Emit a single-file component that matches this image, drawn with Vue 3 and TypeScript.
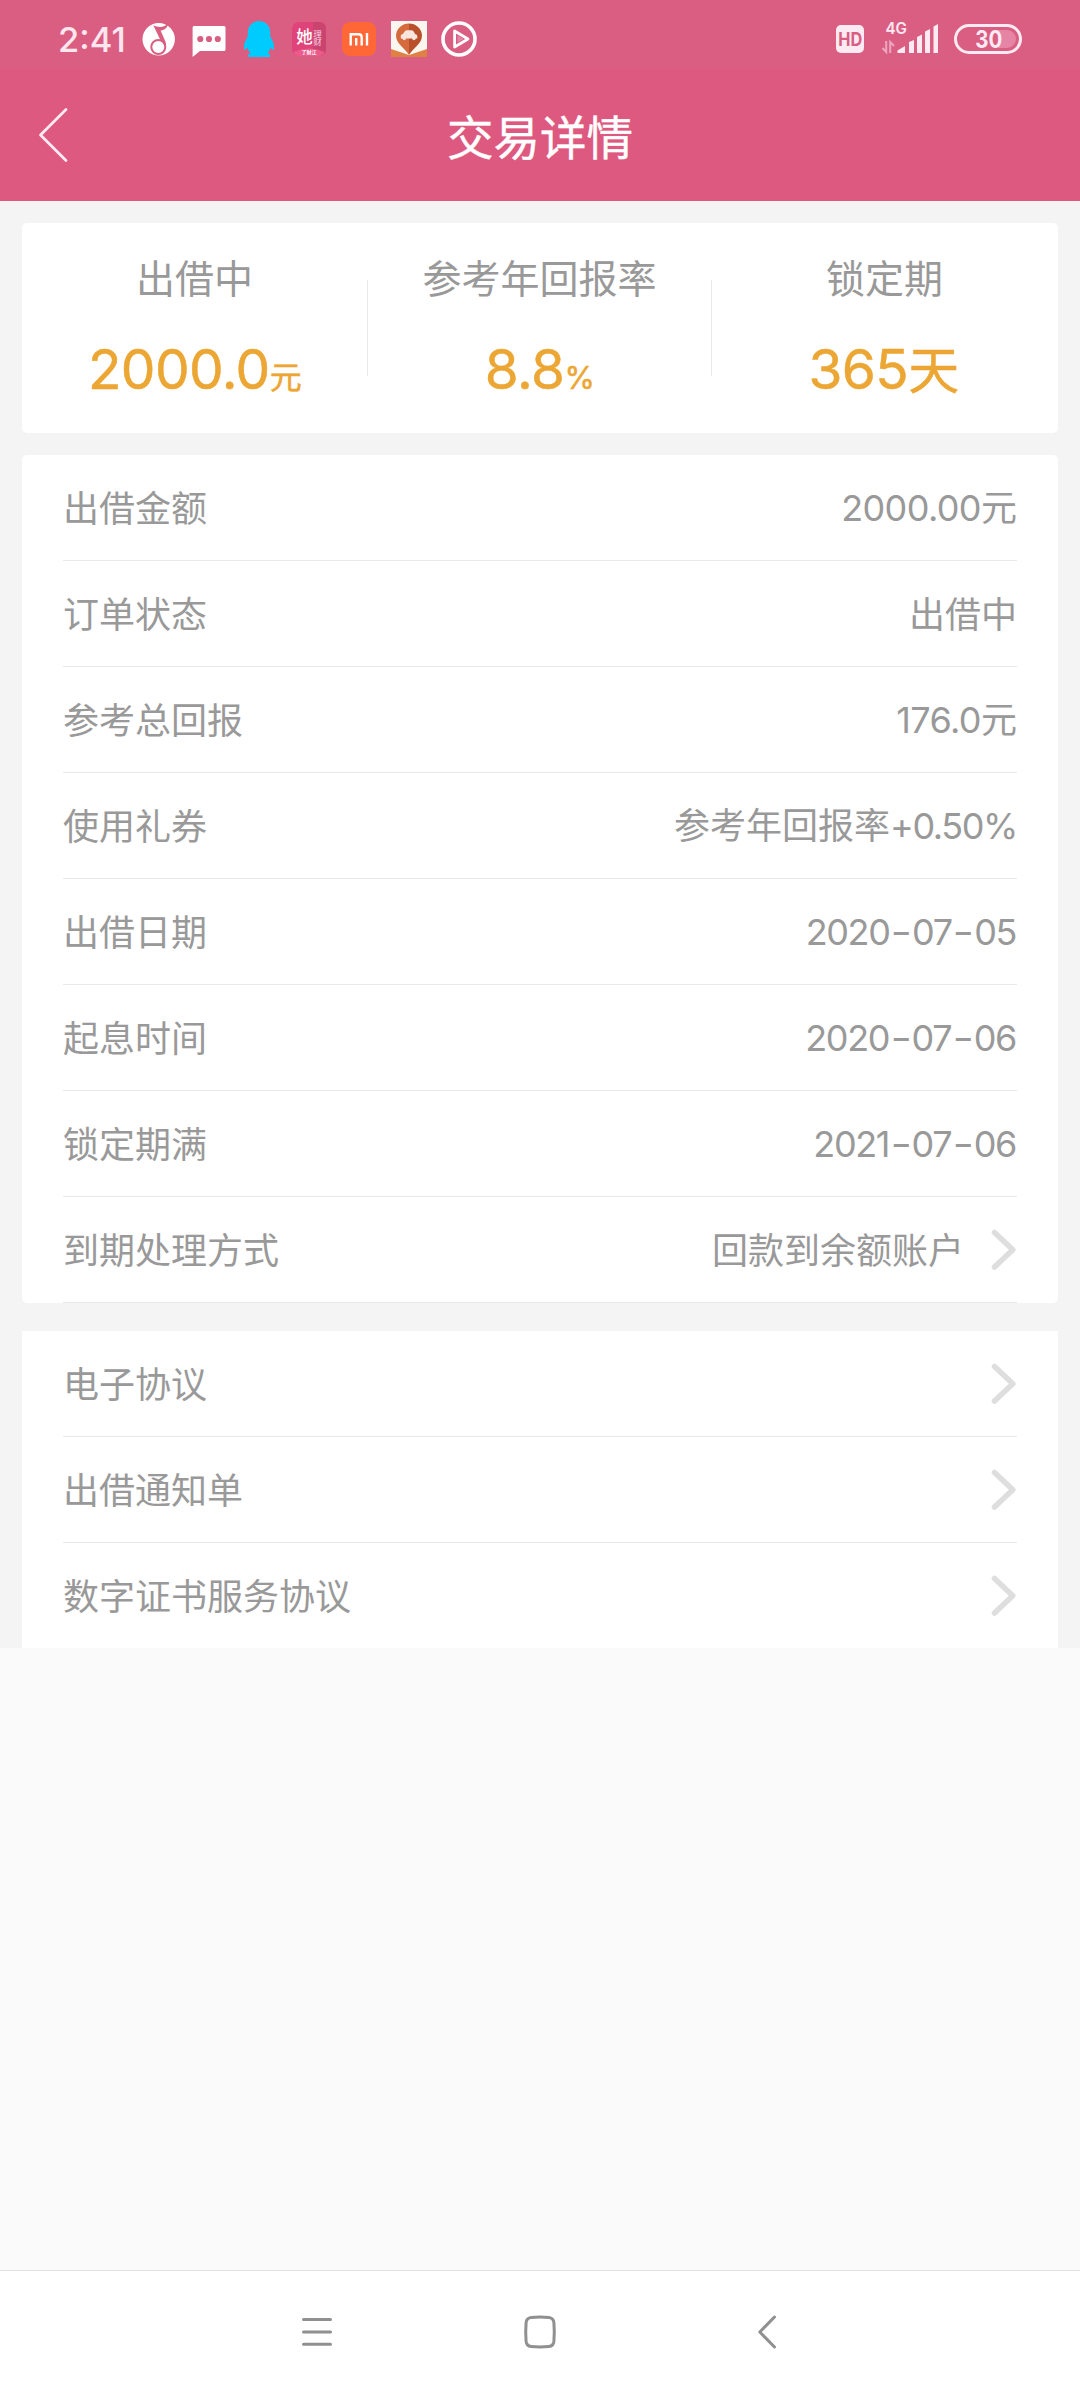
<script setup lang="ts">
interface Row {
  label: string
  value?: string
  kind?: 'money' | 'rate' | 'date'
  arrow?: boolean
}

interface Part {
  text: string
  type: 'han' | 'digits' | 'dash'
}

const details: Row[] = [
  { label: '出借金额', value: '2000.00元', kind: 'money' },
  { label: '订单状态', value: '出借中' },
  { label: '参考总回报', value: '176.0元', kind: 'money' },
  { label: '使用礼券', value: '参考年回报率+0.50%', kind: 'rate' },
  { label: '出借日期', value: '2020-07-05', kind: 'date' },
  { label: '起息时间', value: '2020-07-06', kind: 'date' },
  { label: '锁定期满', value: '2021-07-06', kind: 'date' },
  { label: '到期处理方式', value: '回款到余额账户', arrow: true },
]

const documents: Row[] = [
  { label: '电子协议', arrow: true },
  { label: '出借通知单', arrow: true },
  { label: '数字证书服务协议', arrow: true },
]

// Splits a value so that figures and dashes can be tracked apart from Chinese text.
function split(value: string): Part[] {
  return (value.match(/-|[0-9.+%]+|[^0-9.+%-]+/g) ?? []).map((text) => ({
    text,
    type: text === '-' ? 'dash' : /^[0-9.+%]/.test(text) ? 'digits' : 'han',
  }))
}
</script>

<template>
  <div class="screen">
    <div class="status">
      <span class="time">2:41</span>
      <div class="apps">
        <svg width="34" height="36" viewBox="0 0 34 36">
          <circle cx="16.7" cy="18.3" r="16.2" fill="#fff" />
          <circle cx="16.3" cy="26" r="7" fill="#fff" stroke="#d95e82" stroke-width="2" />
          <path d="M11.3 4.2 C17 7 22 6.4 26.4 2.2 C25.4 6.6 23.4 8.6 18.6 9.6 L23.6 21 C24 22.6 24 24.6 23.4 26.6 L20.8 21.8 L18.6 19.4Z" fill="#d95e82" />
        </svg>
        <svg width="34" height="36" viewBox="0 0 34 36">
          <path d="M2 5 H32 Q33.5 5 33.5 6.5 V28.5 Q33.5 30 32 30 H8 L.6 36 V6.5 Q.6 5 2 5Z" fill="#fff" />
          <g fill="#d95e82"><circle cx="8.3" cy="18" r="3.1" /><circle cx="17" cy="18" r="3.1" /><circle cx="25.8" cy="18" r="3.1" /></g>
        </svg>
        <svg width="34" height="36" viewBox="0 0 34 36">
          <path d="M17 0 C23 0 28 4.5 28.2 11 C28.2 14 28 15 29 17 C31.5 20.5 32.6 25.5 31.8 28.5 C30.8 29.5 29.4 27.6 28.5 26.2 C28 29 26.8 31 25.5 32.2 C28 33 28.8 34 27.8 36 H6.4 C5.4 34 6.2 33 8.6 32.2 C7.2 31 6 29 5.5 26.2 C4.6 27.6 3.2 29.5 2.2 28.5 C1.4 25.5 2.5 20.5 5 17 C6 15 5.8 14 5.8 11 C6 4.5 11 0 17 0Z" fill="#00cbff" />
        </svg>
        <svg width="34" height="36" viewBox="0 0 34 36">
          <rect x="0" y="1" width="34" height="34" rx="7" fill="#e0437a" />
          <path d="M21 1 H27 Q34 1 34 8 V28 Q34 35 27 35 H21Z" fill="#ca4470" />
          <path d="M1.3 31 Q17 24 32.7 31 Q31 35 27 35 H7 Q3 35 1.3 31Z" fill="#ec5c8b" />
          <text x="4.3" y="22" class="cjk" font-size="16.5" font-weight="500" fill="#fff">她</text>
          <text x="21.3" y="15.5" class="cjk" font-size="8.5" fill="#fbd3e1">理</text>
          <text x="21.3" y="24.3" class="cjk" font-size="8.5" fill="#fbd3e1">财</text>
          <text x="9.6" y="33.4" class="cjk" font-size="5" font-weight="700" fill="#fff">了财江</text>
        </svg>
        <svg width="34" height="36" viewBox="0 0 34 36">
          <rect x="0" y="1" width="34" height="34" rx="8" fill="#ff6736" />
          <path d="M8.7 24.5 V13.2 H16.5 Q19.7 13.2 19.7 16.4 V24.5 M14.2 17 V24.5 M25 12 V24.5" fill="none" stroke="#fff" stroke-width="2.4" />
        </svg>
        <svg width="34" height="36" viewBox="0 0 34 36">
          <rect x="-1" y="0" width="36" height="36" fill="#fbf6f0" />
          <path d="M-1 28 L17 34 L35 28 V36 H-1Z" fill="#df8045" />
          <path d="M17 34 C13 27 4 23 4 14.5 A13 12.5 0 0 1 17 2.5Z" fill="#d56a3c" />
          <path d="M17 34 C21 27 30 23 30 14.5 A13 12.5 0 0 0 17 2.5Z" fill="#b9502b" />
          <path d="M8.8 17.5 V14.5 Q9 13.2 11 13 Q12.7 9.2 15 9.2 H19.3 Q21.8 9.2 23 13 Q25.3 13.4 25.3 15 V17.5Z" fill="#f6e6de" />
          <circle cx="12.2" cy="17.6" r="1.7" fill="#f6e6de" /><circle cx="22" cy="17.6" r="1.7" fill="#f6e6de" />
        </svg>
        <svg width="34" height="36" viewBox="0 0 34 36">
          <circle cx="17" cy="18" r="16" fill="none" stroke="#fff" stroke-width="3.6" />
          <path d="M12.6 10 V26 L26 18Z" fill="none" stroke="#fff" stroke-width="2.8" stroke-linejoin="round" />
          <path d="M15.6 14.5 V21.5 L21.5 18Z" fill="#e38aa6" />
        </svg>
      </div>
      <div class="signals">
        <svg width="28" height="36" viewBox="0 0 28 36">
          <rect x="0" y="4" width="28" height="28" rx="5" fill="#feeaf2" />
          <text x="14.3" y="24.8" class="latin" font-size="18.5" font-weight="700" text-anchor="middle" textLength="24" lengthAdjust="spacingAndGlyphs" fill="#d95e82">HD</text>
        </svg>
        <svg class="mobile" width="58" height="36" viewBox="0 0 58 36">
          <text x="4.5" y="13" class="latin" font-size="15.5" font-weight="600" textLength="21.5" lengthAdjust="spacingAndGlyphs" fill="#feeaf2">4G</text>
          <path d="M5.2 20 V31 L1.5 27 M9.2 32 V21 L13 25" fill="none" stroke="#eda6bf" stroke-width="2" />
          <path d="M16.5 32 V29.5 L24 25 V32Z M28 21 L33 19 V32 H28Z M36 16 L41 13.5 V32 H36Z M44 10.5 L49 8 V32 H44Z M52.5 5.5 L57 3 V32 H52.5Z" fill="#feeaf2" />
        </svg>
        <svg class="battery" width="68" height="36" viewBox="0 0 68 36">
          <path d="M44 9 H53 A9 9 0 0 1 53 27 H44Z" fill="#e684a5" />
          <rect x="1.5" y="4.5" width="65" height="27" rx="13.5" fill="none" stroke="#feeaf2" stroke-width="3" />
          <text x="34.7" y="26.7" class="latin" font-size="24" font-weight="700" text-anchor="middle" textLength="27" lengthAdjust="spacingAndGlyphs" fill="#feeaf2">30</text>
        </svg>
      </div>
    </div>

    <header class="header">
      <svg class="back" width="30" height="56" viewBox="0 0 30 56">
        <path d="M28 2.5 L2.5 28 L28 53.5" fill="none" stroke="#feeaf2" stroke-width="2.8" stroke-linecap="round" stroke-linejoin="round" />
      </svg>
      <h1>交易详情</h1>
    </header>

    <main class="content">
      <section class="card summary">
        <div class="stat">
          <span class="caption">出借中</span>
          <span class="amount">2000.0<small>元</small></span>
        </div>
        <i class="divider"></i>
        <div class="stat middle">
          <span class="caption">参考年回报率</span>
          <span class="amount">8.8<small class="percent">%</small></span>
        </div>
        <i class="divider"></i>
        <div class="stat">
          <span class="caption">锁定期</span>
          <span class="amount days">365<b>天</b></span>
        </div>
      </section>

      <section class="card details">
        <div v-for="row in details" :key="row.label" class="row">
          <span class="label">{{ row.label }}</span>
          <span class="value" :class="row.kind"><span v-for="(part, i) in split(row.value ?? '')" :key="i" :class="part.type">{{ part.text }}</span></span>
          <svg v-if="row.arrow" class="chevron" width="25" height="42" viewBox="0 0 25 42">
            <path d="M2.5 3.5 L20.8 20.7 L2.5 38" />
          </svg>
        </div>
      </section>

      <section class="card documents">
        <div v-for="row in documents" :key="row.label" class="row">
          <span class="label">{{ row.label }}</span>
          <svg class="chevron" width="25" height="42" viewBox="0 0 25 42">
            <path d="M2.5 3.5 L20.8 20.7 L2.5 38" />
          </svg>
        </div>
      </section>
    </main>

    <nav class="navbar">
      <svg width="32" height="34" viewBox="0 0 32 34">
        <path d="M2.5 4.5 H29.5 M2.5 17 H29.5 M2.5 29.3 H29.5" />
      </svg>
      <svg width="34" height="34" viewBox="0 0 34 34">
        <path d="M8 2.5 Q17 1.6 26 2.5 Q30.3 3 30.9 7.5 Q31.7 17 30.9 26.5 Q30.3 31 26 31.5 Q17 32.4 8 31.5 Q3.7 31 3.1 26.5 Q2.3 17 3.1 7.5 Q3.7 3 8 2.5Z" />
      </svg>
      <svg width="32" height="34" viewBox="0 0 32 34">
        <path d="M27.5 2 L12.8 17 L27.5 32" />
      </svg>
    </nav>
  </div>
</template>

<style>
body {
  margin: 0;
  background: #fafafa;
}
</style>

<style scoped>
.screen {
  width: 1080px;
  height: 2400px;
  display: flex;
  flex-direction: column;
  background: #fafafa;
  font-family: Inter, "Noto Sans CJK SC", sans-serif;
  color: #999;
  overflow: hidden;
}
svg {
  display: block;
  flex: none;
  overflow: visible;
}
.cjk {
  font-family: "Noto Sans CJK SC", sans-serif;
}
.latin {
  font-family: Inter, sans-serif;
}
.status {
  height: 69px;
  box-sizing: border-box;
  padding: 21px 58px 0 58px;
  display: flex;
  align-items: flex-start;
  background: #d95e82;
}
.time {
  width: 84px;
  font-size: 34.5px;
  line-height: 37px;
  font-weight: 500;
  color: #fee6ef;
  white-space: nowrap;
}
.apps {
  display: flex;
  gap: 16px;
}
.signals {
  display: flex;
  margin-left: auto;
}
.mobile {
  margin-left: 17px;
}
.battery {
  margin-left: 15px;
}
.header {
  height: 132px;
  display: flex;
  align-items: center;
  background: #de5980;
}
.back {
  margin: 0 0 1px 38px;
}
h1 {
  flex: 1;
  margin: 0 68px 0 0;
  padding-top: 5px;
  text-align: center;
  font-size: 46.5px;
  line-height: 60px;
  font-weight: 400;
  color: #fff;
  -webkit-text-stroke: 0.4px #fff;
}
.content {
  height: 1447px;
  box-sizing: border-box;
  padding: 22px 22px 0;
  background: #f4f4f4;
  overflow: hidden;
}
.card {
  background: #fff;
  border-radius: 5px;
}
.summary {
  height: 210px;
  display: flex;
}
.stat {
  width: 345px;
  display: flex;
  flex-direction: column;
  align-items: center;
}
.middle {
  width: 343px;
}
.caption {
  margin-top: 28px;
  font-size: 39px;
  line-height: 56px;
}
.amount {
  margin-top: 27px;
  font-size: 55px;
  line-height: 70px;
  font-weight: 400;
  letter-spacing: -0.6px;
  color: #eca633;
  -webkit-text-stroke: 0.5px #eca633;
  white-space: nowrap;
}
.amount small {
  font-size: 32px;
}
.amount .percent {
  font-size: 31px;
}
.amount b {
  font-size: 51px;
  font-weight: 400;
}
.days {
  margin-right: 2px;
  letter-spacing: -0.6px;
}
.divider {
  width: 1px;
  height: 96px;
  margin-top: 57px;
  background: #e8e8e8;
}
.details {
  margin-top: 22px;
  padding: 0 41px;
}
.documents {
  margin-top: 28px;
  padding: 0 41px;
  border-radius: 0;
}
.row {
  height: 106px;
  box-sizing: border-box;
  display: flex;
  align-items: center;
  border-bottom: 1px solid #e8e8e8;
  font-size: 36px;
  line-height: 52px;
}
.label,
.value {
  padding-top: 2px;
}
.value {
  margin-left: auto;
  white-space: nowrap;
}
.value.money,
.value.rate,
.value.date {
  padding-top: 0;
}
.money .digits {
  letter-spacing: -0.6px;
}
.rate .digits {
  letter-spacing: -1.4px;
}
.date {
  margin-right: 1px;
}
.date .digits {
  letter-spacing: -1.4px;
}
.date .dash {
  display: inline-block;
  margin: 0 2.5px 0 3.5px;
  transform: scaleX(1.3);
}
.chevron {
  margin-left: auto;
}
.value + .chevron {
  margin-left: 28px;
}
.chevron path {
  fill: none;
  stroke: #dedede;
  stroke-width: 5.5;
  stroke-linecap: round;
  stroke-linejoin: round;
}
.navbar {
  height: 130px;
  box-sizing: border-box;
  margin-top: auto;
  padding: 0 301px 8px;
  display: flex;
  align-items: center;
  justify-content: space-between;
  border-top: 1px solid #e2e2e2;
  background: #fff;
}
.navbar path {
  fill: none;
  stroke: #909090;
  stroke-width: 3;
  stroke-linecap: round;
  stroke-linejoin: round;
}
</style>
